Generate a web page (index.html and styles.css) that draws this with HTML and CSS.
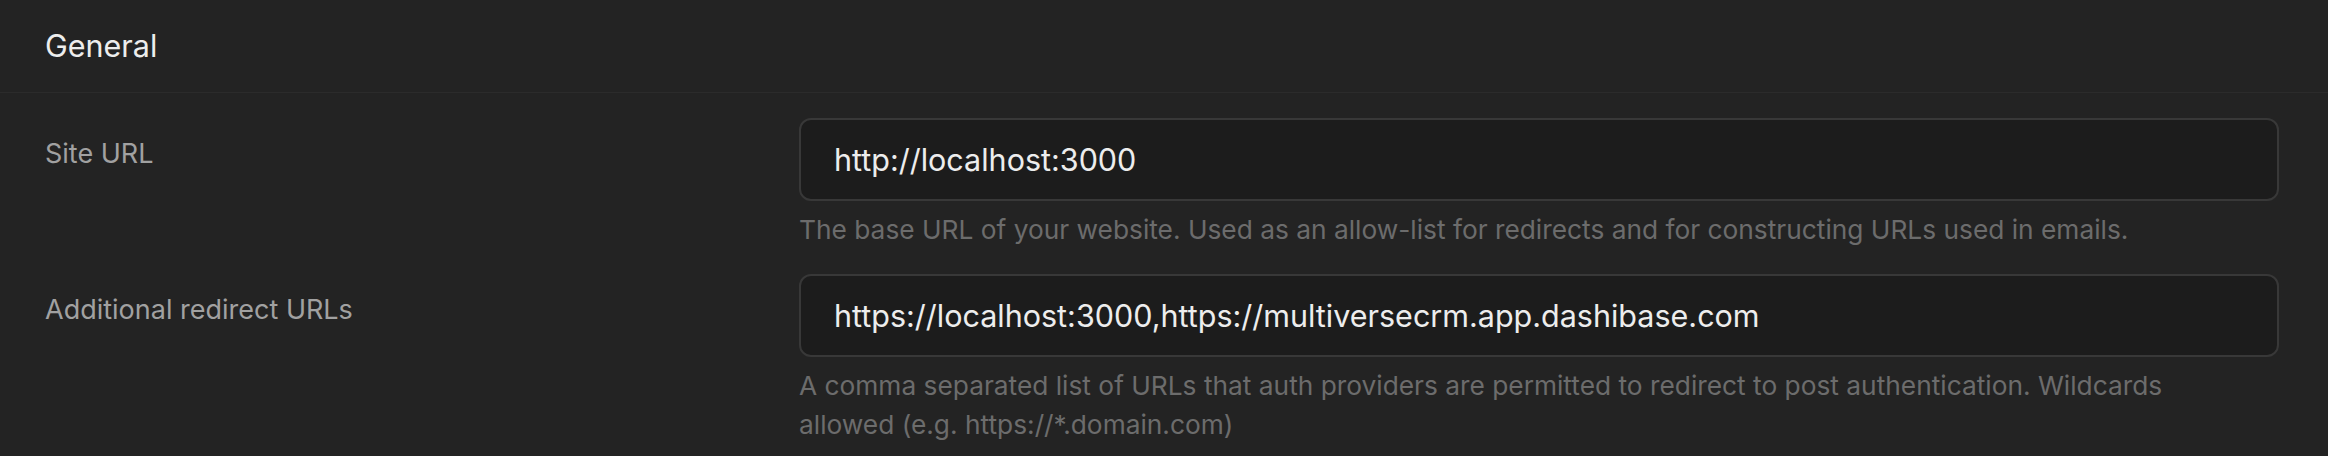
FILE: index.html
```html
<!DOCTYPE html>
<html lang="en">
<head>
<meta charset="utf-8">
<title>General</title>
<link rel="stylesheet" href="styles.css">
</head>
<body>
<section class="panel">
  <header class="panel-header">
    <h2 class="panel-title">General</h2>
  </header>
  <div class="panel-body">
    <div class="field">
      <label class="field-label" for="site-url">Site URL</label>
      <div class="field-control">
        <input class="field-input" id="site-url" type="text" value="http://localhost:3000">
        <p class="field-help">The base URL of your website. Used as an allow-list for redirects and for constructing URLs used in emails.</p>
      </div>
    </div>
    <div class="field">
      <label class="field-label" for="redirect-urls">Additional redirect URLs</label>
      <div class="field-control">
        <input class="field-input" id="redirect-urls" type="text" value="https://localhost:3000,https://multiversecrm.app.dashibase.com">
        <p class="field-help">A comma separated list of URLs that auth providers are permitted to redirect to post authentication. Wildcards allowed (e.g. https://*.domain.com)</p>
      </div>
    </div>
  </div>
</section>
</body>
</html>
```

FILE: styles.css
```css
* { box-sizing: border-box; }

html, body {
  margin: 0;
  padding: 0;
  background: #232323;
}

body {
  font-family: Inter, "Noto Sans", sans-serif;
  -webkit-font-smoothing: antialiased;
}

.panel {
  width: 2328px;
  height: 456px;
  overflow: hidden;
  background: #232323;
}

.panel-header {
  height: 93px;
  display: flex;
  align-items: center;
  padding-left: 45px;
  border-bottom: 1px solid #2b2b2b;
}

.panel-title {
  margin: 0;
  font-size: 30.5px;
  font-weight: 400;
  color: #ededed;
  line-height: 40px;
}

.panel-body {
  display: flex;
  flex-direction: column;
  gap: 25px;
  padding: 25px 49px 0 45px;
}

.field {
  display: grid;
  grid-template-columns: 754px 1fr;
}

.field-label {
  margin-top: 16px;
  font-size: 27px;
  line-height: 40px;
  color: #a1a1a1;
}

.field-control {
  display: flex;
  flex-direction: column;
}

.field-input {
  display: block;
  width: 100%;
  height: 83px;
  padding: 0 33px;
  margin: 0;
  background: #1c1c1c;
  border: 2px solid #383838;
  border-radius: 12px;
  color: #ededed;
  font-family: inherit;
  font-size: 30.5px;
  outline: none;
}

.field-help {
  margin: 9px 0 0;
  padding-right: 60px;
  font-size: 26.3px;
  line-height: 39px;
  color: #6c6c6c;
}
```
